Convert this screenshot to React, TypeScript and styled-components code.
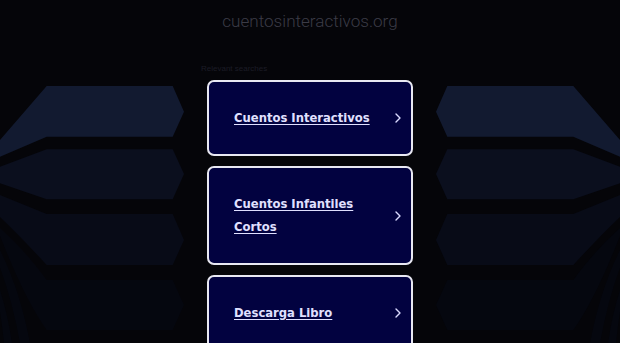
import React from "react";
import styled, { createGlobalStyle } from "styled-components";

const GlobalStyle = createGlobalStyle`
  html, body { margin: 0; padding: 0; background: #050509; }
  body { font-family: "DejaVu Sans", Verdana, sans-serif; }
`;

const Page = styled.div`
  width: 620px;
  height: 343px;
  overflow: hidden;
  background: #050509;
  display: flex;
  flex-direction: column;
`;

const Header = styled.header`
  height: 60px;
  display: flex;
  justify-content: center;
  padding-top: 9px;
  box-sizing: border-box;
`;

const Domain = styled.h1`
  margin: 0;
  font-family: Roboto, "Liberation Sans", Arial, sans-serif;
  font-weight: 300;
  font-size: 17.1px;
  line-height: 24px;
  color: #3b3b46;
`;

const Body = styled.div`
  display: grid;
  grid-template-columns: 1fr 206px 1fr;
  flex: 1;
  min-height: 0;
`;

const Wing = styled.svg<{ $mirror?: boolean }>`
  display: block;
  width: 207px;
  height: 283px;
  transform: ${(p) => (p.$mirror ? "scaleX(-1)" : "none")};
`;

const Main = styled.main`
  display: flex;
  flex-direction: column;
`;

const Label = styled.div`
  font-family: "Liberation Sans", Arial, sans-serif;
  font-size: 8px;
  line-height: 12px;
  color: #1c1c26;
  margin: 3px 0 5px -6px;
`;

const List = styled.div`
  display: flex;
  flex-direction: column;
  gap: 10px;
`;

const Card = styled.a`
  display: flex;
  align-items: center;
  justify-content: space-between;
  box-sizing: border-box;
  width: 206px;
  padding: 24.5px 10px 24.5px 25px;
  background: #020240;
  border: 2px solid #e8e8f2;
  border-radius: 7px;
  text-decoration: none;
`;

const CardText = styled.span`
  max-width: 146px;
  font-family: "DejaVu Sans", Verdana, sans-serif;
  font-weight: 700;
  font-size: 11.6px;
  line-height: 23px;
  color: #e0e0ff;
  text-decoration: underline;
  text-decoration-thickness: 1px;
  text-underline-offset: 2px;
`;

const Chevron = styled.svg`
  display: block;
  width: 6px;
  height: 10px;
  flex: none;
`;

const items = ["Cuentos Interactivos", "Cuentos Infantiles Cortos", "Descarga Libro"];

const WingArt: React.FC<{ mirror?: boolean }> = ({ mirror }) => (
  <Wing $mirror={mirror} viewBox="0 0 207 283" aria-hidden="true">
    <g transform="translate(0,-60)">
      <polygon
        fill="#121a30"
        points="46.7,86 172.7,86 184,111.7 172.7,136.7 46.7,136.7 0,156.7 0,140"
      />
      <polygon
        fill="#0b0f1e"
        points="46.7,149.3 172.7,149.3 184,174 172.7,199.3 46.7,199.3 0,183.3 0,166.7"
      />
      <path
        fill="#080b17"
        d="M46.7,214 L172.7,214 L184,240 L172.7,265 L46.7,265 Q20,236 0,217 L0,195 Z"
      />
      <path
        fill="#05070f"
        d="M46.7,280 L172.7,280 L184,305 L172.7,330 L46.7,330 Q25,300 0,236 L0,228 Q25,250 46.7,280 Z"
      />
      <path fill="#05070f" d="M0,250 Q20,290 30,343 L20,343 Q12,300 0,268 Z" />
      <path fill="#05070f" d="M0,290 Q8,315 12,343 L4,343 Q2,325 0,312 Z" />
      <polygon fill="#04050c" points="46.7,345 172.7,345 184,370 46.7,370" />
    </g>
  </Wing>
);

export default function App() {
  return (
    <>
      <GlobalStyle />
      <Page>
        <Header>
          <Domain>cuentosinteractivos.org</Domain>
        </Header>
        <Body>
          <WingArt />
          <Main>
            <Label>Relevant searches</Label>
            <List>
              {items.map((t) => (
                <Card key={t} href="#">
                  <CardText>{t}</CardText>
                  <Chevron viewBox="0 0 6 10">
                    <path
                      d="M1 1 L5 5 L1 9"
                      fill="none"
                      stroke="#dadaff"
                      strokeWidth="1.4"
                      strokeLinecap="round"
                      strokeLinejoin="round"
                    />
                  </Chevron>
                </Card>
              ))}
            </List>
          </Main>
          <WingArt mirror />
        </Body>
      </Page>
    </>
  );
}
